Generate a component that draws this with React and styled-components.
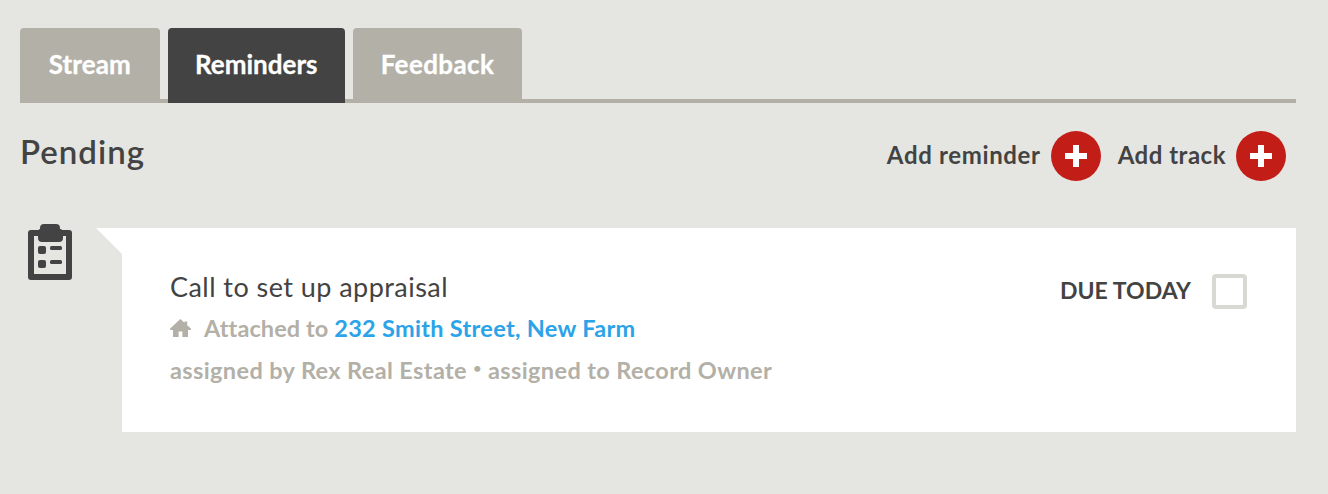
import React from 'react'
import styled, {createGlobalStyle} from 'styled-components'

const GlobalStyle = createGlobalStyle`
  * {
    box-sizing: border-box;
  }
  body {
    margin: 0;
    background-color: #e5e6e1;
    font-family: Lato, 'Open Sans', sans-serif;
    color: #434343;
  }
`

const Page = styled.div`
  height: 494px;
  padding: 28px 32px 0 20px;
  overflow: hidden;
`

const Tabs = styled.nav`
  display: flex;
  height: 75px;
  gap: 8px;
  background: linear-gradient(#b3b0a7, #b3b0a7) bottom / 100% 4px no-repeat;
`

const Tab = styled.button`
  width: ${props => props.$width}px;
  padding: 0 0 4px;
  border: none;
  border-radius: 4px 4px 0 0;
  background-color: ${props => (props.$active ? '#434343' : '#b3b0a7')};
  color: #ffffff;
  font-family: inherit;
  font-size: 26px;
  font-weight: 700;
  letter-spacing: ${props => props.$spacing}px;
  -webkit-text-stroke: 0.3px #ffffff;
  white-space: nowrap;
  cursor: pointer;
`

const Header = styled.header`
  display: flex;
  align-items: center;
  justify-content: space-between;
  height: 50px;
  margin-top: 28px;
  padding-right: 10px;
`

const Heading = styled.h1`
  margin: 0 0 10px;
  font-size: 33px;
  font-weight: 600;
  line-height: 40px;
  letter-spacing: 1px;
`

const Actions = styled.div`
  display: flex;
  gap: 17px;
`

const Action = styled.button`
  display: flex;
  align-items: center;
  gap: 10px;
  padding: 0;
  border: none;
  background: transparent;
  color: inherit;
  font-family: inherit;
  font-size: 24px;
  font-weight: 700;
  letter-spacing: ${props => props.$spacing}px;
  white-space: nowrap;
  cursor: pointer;
`

const ActionLabel = styled.span`
  padding-bottom: 3px;
`

const PlusCircle = styled.span`
  display: flex;
  align-items: center;
  justify-content: center;
  width: 50px;
  height: 50px;
  border-radius: 50%;
  background-color: #c21d17;
`

const Reminder = styled.article`
  display: flex;
  margin-top: 43px;
`

const IconColumn = styled.div`
  width: 76px;
  padding-left: 7px;
  svg {
    display: block;
    margin-top: -1px;
  }
`

const Pointer = styled.div`
  width: 26px;
  height: 26px;
  margin-top: 4px;
  background-color: #ffffff;
  clip-path: polygon(0 0, 100% 0, 100% 100%);
`

const Card = styled.div`
  display: flex;
  flex: 1;
  justify-content: space-between;
  height: 203.5px;
  margin-top: 4px;
  padding: 41px 49px 0 48px;
  background-color: #ffffff;
`

const Title = styled.h2`
  margin: 0;
  font-size: 27px;
  font-weight: 400;
  line-height: 36px;
  letter-spacing: 0.45px;
  white-space: nowrap;
`

const Detail = styled.p`
  display: flex;
  align-items: center;
  margin: ${props => props.$top}px 0 0;
  color: #b3b0a7;
  font-size: 23.5px;
  font-weight: 700;
  line-height: 32px;
  letter-spacing: ${props => props.$spacing}px;
  white-space: pre;
  svg {
    margin-right: 13px;
  }
`

const RecordLink = styled.a`
  color: #2ba3e8;
  letter-spacing: 0.3px;
`

const Dot = styled.span`
  width: 21px;
  padding-bottom: 4px;
  font-size: 14px;
  line-height: 28px;
  text-align: center;
`

const Due = styled.div`
  display: flex;
  align-items: center;
  gap: 21px;
  height: 35px;
  margin-top: 5px;
  font-size: 23px;
  font-weight: 700;
  letter-spacing: 0.05px;
  white-space: nowrap;
`

const DueLabel = styled.span`
  padding-bottom: 4px;
`

const Checkbox = styled.span`
  width: 35px;
  height: 35px;
  border: 4px solid #d8d9d3;
  border-radius: 4px;
`

const Plus = () => (
  <PlusCircle>
    <svg width="22" height="22" viewBox="0 0 22 22">
      <path d="M8 0h6v8h8v6h-8v8H8v-8H0V8h8z" fill="#fff" />
    </svg>
  </PlusCircle>
)

const ClipboardIcon = () => (
  <svg width="46" height="58" viewBox="0 0 46 58" fill="#434343">
    <rect x="4" y="10" width="38" height="44" fill="none" stroke="#434343" strokeWidth="6" strokeLinejoin="round" />
    <path d="M17 1h12q4 0 4 4v1q3 0 3 4v5q0 4-4 4H15q-4 0-4-4v-5q0-4 2-4V5q0-4 4-4z" />
    <rect x="11" y="23" width="8" height="8" rx="2" />
    <rect x="11" y="37" width="8" height="8" rx="2" />
    <rect x="23" y="23" width="12" height="4" rx="1.5" />
    <rect x="23" y="37" width="12" height="4" rx="1.5" />
  </svg>
)

const HomeIcon = () => (
  <svg width="21" height="19" viewBox="0 0 21 19" fill="#b3b0a7">
    <path d="M10.3 0L14.500 3.700V2.500h2.700v3.700L21 9.800v1.200h-3V18h-5.600v-5.500H8.600V18H3v-7H0V9.800z" />
  </svg>
)

const tabs = [
  {label: 'Stream', width: 139.5, spacing: 0.1},
  {label: 'Reminders', width: 177.5, spacing: 0, active: true},
  {label: 'Feedback', width: 169, spacing: 0.4},
]

const App = () => (
  <>
    <GlobalStyle />
    <Page>
      <Tabs>
        {tabs.map(tab => (
          <Tab key={tab.label} $width={tab.width} $spacing={tab.spacing} $active={tab.active}>
            {tab.label}
          </Tab>
        ))}
      </Tabs>
      <Header>
        <Heading>Pending</Heading>
        <Actions>
          <Action $spacing={0.65}>
            <ActionLabel>Add reminder</ActionLabel>
            <Plus />
          </Action>
          <Action $spacing={0.5}>
            <ActionLabel>Add track</ActionLabel>
            <Plus />
          </Action>
        </Actions>
      </Header>
      <Reminder>
        <IconColumn>
          <ClipboardIcon />
        </IconColumn>
        <Pointer />
        <Card>
          <div>
            <Title>Call to set up appraisal</Title>
            <Detail $top={7} $spacing={0.1}>
              <HomeIcon />
              <span>Attached to </span>
              <RecordLink>232 Smith Street, New Farm</RecordLink>
            </Detail>
            <Detail $top={10} $spacing={0.38}>
              <span>assigned by Rex Real Estate</span>
              <Dot>•</Dot>
              <span>assigned to Record Owner</span>
            </Detail>
          </div>
          <Due>
            <DueLabel>DUE TODAY</DueLabel>
            <Checkbox />
          </Due>
        </Card>
      </Reminder>
    </Page>
  </>
)

export default App
